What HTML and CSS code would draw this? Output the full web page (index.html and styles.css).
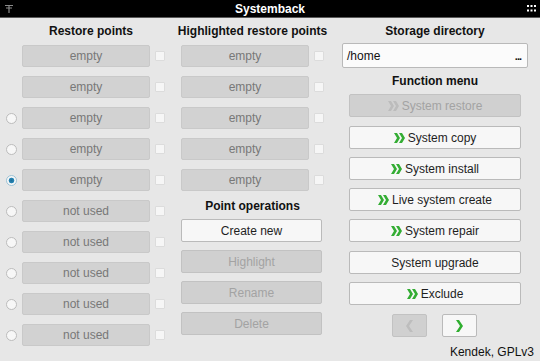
FILE: index.html
```html
<!DOCTYPE html>
<html lang="en">
<head>
    <meta charset="UTF-8">
    <link rel="stylesheet" href="styles.css">
    <title>Systemback</title>
</head>
<body>
    <div class="titlebar">
        <svg class="pin" width="8" height="9" viewBox="0 0 8 9"><path d="M0 1.5h8M1 4h6M4 1.5v7.5" stroke="#8a8a8a" stroke-width="1.2" fill="none"/></svg>
        <span class="title">Systemback</span>
        <svg class="dots" width="9" height="7" viewBox="0 0 9 7"><rect x="0" y="0" width="2" height="2" fill="#fff"/><rect x="3.5" y="0" width="2" height="2" fill="#fff"/><rect x="7" y="0" width="2" height="2" fill="#fff"/><rect x="0" y="4.5" width="2" height="2" fill="#fff"/><rect x="3.5" y="4.5" width="2" height="2" fill="#fff"/><rect x="7" y="4.5" width="2" height="2" fill="#fff"/></svg>
    </div>

    <div class="main">
        <!-- restore points -->
        <section class="col col-restore">
            <h2 class="head">Restore points</h2>
            <div class="list">
                <div class="row"><span class="radio none"></span><div class="field">empty</div><span class="check"></span></div>
                <div class="row"><span class="radio none"></span><div class="field">empty</div><span class="check"></span></div>
                <div class="row"><span class="radio"></span><div class="field">empty</div><span class="check"></span></div>
                <div class="row"><span class="radio"></span><div class="field">empty</div><span class="check"></span></div>
                <div class="row"><span class="radio on"></span><div class="field">empty</div><span class="check"></span></div>
                <div class="row"><span class="radio"></span><div class="field">not used</div><span class="check"></span></div>
                <div class="row"><span class="radio"></span><div class="field">not used</div><span class="check"></span></div>
                <div class="row"><span class="radio"></span><div class="field">not used</div><span class="check"></span></div>
                <div class="row"><span class="radio"></span><div class="field">not used</div><span class="check"></span></div>
                <div class="row"><span class="radio"></span><div class="field">not used</div><span class="check"></span></div>
            </div>
        </section>

        <!-- highlighted points + operations -->
        <section class="col col-high">
            <h2 class="head">Highlighted restore points</h2>
            <div class="list">
                <div class="row"><div class="field">empty</div><span class="check"></span></div>
                <div class="row"><div class="field">empty</div><span class="check"></span></div>
                <div class="row"><div class="field">empty</div><span class="check"></span></div>
                <div class="row"><div class="field">empty</div><span class="check"></span></div>
                <div class="row"><div class="field">empty</div><span class="check"></span></div>
            </div>
            <h2 class="head ops-head">Point operations</h2>
            <div class="ops">
                <button class="btn">Create new</button>
                <button class="btn" disabled>Highlight</button>
                <button class="btn" disabled>Rename</button>
                <button class="btn" disabled>Delete</button>
            </div>
        </section>

        <!-- storage + function menu -->
        <section class="col col-func">
            <h2 class="head">Storage directory</h2>
            <div class="dir"><span>/home</span><span class="more">...</span></div>
            <h2 class="head menu-head">Function menu</h2>
            <div class="menu">
                <button class="btn" disabled><svg class="chev" width="11" height="10" viewBox="0 0 11 10"><polygon points="0,0 3,0 6,5 3,10 0,10 3,5"/><polygon points="5,0 8,0 11,5 8,10 5,10 8,5"/></svg>System restore</button>
                <button class="btn"><svg class="chev" width="11" height="10" viewBox="0 0 11 10"><polygon points="0,0 3,0 6,5 3,10 0,10 3,5"/><polygon points="5,0 8,0 11,5 8,10 5,10 8,5"/></svg>System copy</button>
                <button class="btn"><svg class="chev" width="11" height="10" viewBox="0 0 11 10"><polygon points="0,0 3,0 6,5 3,10 0,10 3,5"/><polygon points="5,0 8,0 11,5 8,10 5,10 8,5"/></svg>System install</button>
                <button class="btn"><svg class="chev" width="11" height="10" viewBox="0 0 11 10"><polygon points="0,0 3,0 6,5 3,10 0,10 3,5"/><polygon points="5,0 8,0 11,5 8,10 5,10 8,5"/></svg>Live system create</button>
                <button class="btn"><svg class="chev" width="11" height="10" viewBox="0 0 11 10"><polygon points="0,0 3,0 6,5 3,10 0,10 3,5"/><polygon points="5,0 8,0 11,5 8,10 5,10 8,5"/></svg>System repair</button>
                <button class="btn">System upgrade</button>
                <button class="btn"><svg class="chev" width="11" height="10" viewBox="0 0 11 10"><polygon points="0,0 3,0 6,5 3,10 0,10 3,5"/><polygon points="5,0 8,0 11,5 8,10 5,10 8,5"/></svg>Exclude</button>
            </div>
            <div class="nav">
                <button class="btn nav-btn" disabled><svg width="8" height="12" viewBox="0 0 8 12"><polygon points="7,0 4,0 0,6 4,12 7,12 3,6" fill="#bdbdbd"/></svg></button>
                <button class="btn nav-btn"><svg width="8" height="12" viewBox="0 0 8 12"><polygon points="0,0 3,0 7,6 3,12 0,12 4,6" fill="#2fae2f"/></svg></button>
            </div>
        </section>
    </div>

    <div class="footer">Kendek, GPLv3</div>
</body>
</html>
```

FILE: styles.css
```css
body{
    margin: 0;
    width: 540px;
    height: 361px;
    overflow: hidden;
    background-color: #e7e7e7;
    font-family: "Liberation Sans", Arial, sans-serif;
    font-size: 12px;
    color: #1e1e1e;
}
.titlebar{
    height: 18px;
    background-color: #000;
    border-bottom: 1px solid #5a5a5a;
    box-sizing: border-box;
    display: flex;
    align-items: center;
    padding: 0 4px 0 5px;
}
.title{
    flex: 1;
    text-align: center;
    color: #fff;
    font-weight: bold;
    font-size: 12px;
}
.main{
    display: flex;
    align-items: flex-start;
    padding: 3px 0 0 6px;
}
.col{
    display: flex;
    flex-direction: column;
}
.head{
    margin: 0;
    height: 20px;
    line-height: 20px;
    font-size: 12px;
    font-weight: bold;
    color: #111;
    display: flex;
    justify-content: center;
    white-space: nowrap;
}
.list{
    margin-top: 4px;
    display: flex;
    flex-direction: column;
    gap: 9px;
}
.row{
    display: flex;
    align-items: center;
}
.field{
    width: 128px;
    height: 22px;
    box-sizing: border-box;
    background-color: #d2d2d2;
    border: 1px solid #c9c9c9;
    border-radius: 2px;
    color: #787878;
    text-align: center;
    line-height: 20px;
}
.check{
    width: 10px;
    height: 10px;
    margin-left: 5px;
    background-color: #f6f6f6;
    border: 1px solid #dcdcdc;
    box-sizing: border-box;
    border-radius: 1px;
}
.radio{
    width: 11px;
    height: 11px;
    margin-right: 5px;
    box-sizing: border-box;
    border-radius: 50%;
    border: 1px solid #bcbcbc;
    background-color: #f7f7f7;
}
.radio.none{
    visibility: hidden;
}
.radio.on{
    border-color: #9cc3d6;
    background: radial-gradient(circle, #1a6f9a 0, #2a86b5 2.5px, #f7f7f7 3.2px);
}

/* column sizes */
.col-restore{
    width: 160px;
}
.col-restore .head{
    padding-left: 10px;
}
.col-high{
    width: 143px;
    margin-left: 15px;
}
.col-func{
    width: 186px;
    margin-left: 18px;
}

/* buttons */
.btn{
    height: 23px;
    box-sizing: border-box;
    background-color: #f7f7f7;
    border: 1px solid #bababa;
    border-radius: 2px;
    font-family: inherit;
    font-size: 12px;
    color: #1e1e1e;
    display: flex;
    align-items: center;
    justify-content: center;
    padding: 0;
}
.btn:disabled{
    background-color: #d0d0d0;
    border-color: #c2c2c2;
    color: #a3a3a3;
}
.ops-head{
    margin-top: 5px;
}
.ops{
    margin-top: 3px;
    width: 141px;
    display: flex;
    flex-direction: column;
    gap: 8px;
}
.chev{
    margin-right: 3px;
    fill: #34ad34;
}
.btn:disabled .chev{
    fill: #bcbcbc;
}

/* storage dir */
.dir{
    margin-top: 2px;
    height: 25px;
    box-sizing: border-box;
    background-color: #fbfbfb;
    border: 1px solid #b9b9b9;
    border-radius: 2px;
    display: flex;
    align-items: center;
    justify-content: space-between;
    padding: 0 6px 0 4px;
    color: #111;
}
.more{
    font-weight: bold;
    font-size: 11px;
    letter-spacing: -1px;
}
.menu-head{
    margin-top: 3px;
}
.menu{
    margin: 3px 7px 0 7px;
    display: flex;
    flex-direction: column;
    gap: 8px;
}
.menu .btn:nth-child(2),
.menu .btn:nth-child(6){
    margin-top: 1px;
}
.nav{
    margin-top: 9px;
    display: flex;
    justify-content: center;
    gap: 15px;
    padding-right: 1px;
}
.nav-btn{
    width: 35px;
}

.footer{
    text-align: right;
    padding-right: 6px;
    margin-top: -1px;
    color: #111;
    line-height: 14px;
}
```
